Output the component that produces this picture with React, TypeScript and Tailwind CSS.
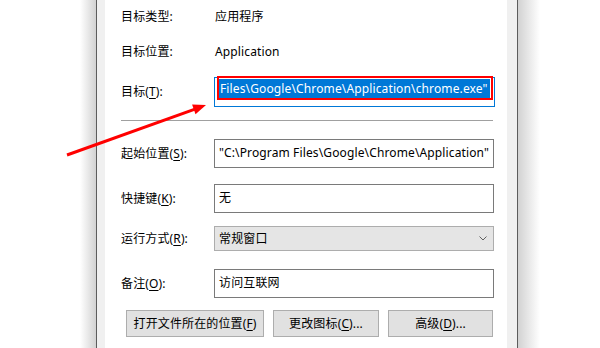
import React from "react"

const font = { fontFamily: '"Noto Sans", "Noto Sans CJK SC", sans-serif' }

function Key({ k }: { k: string }) {
    return <>(<span className="underline underline-offset-2">{k}</span>)</>
}

function Row({ label, children, className }: { label: React.ReactNode; children: React.ReactNode; className?: string }) {
    return (
        <div className={"flex items-center " + (className ?? "")}>
            <div className="w-[93px] shrink-0">{label}</div>
            {children}
        </div>
    )
}

function TextBox({ text }: { text: string }) {
    return (
        <div className="w-[280px] h-[29px] border border-[#7a7a7a] bg-white pl-[4px] pt-[4px] leading-[18px] overflow-hidden whitespace-nowrap">
            {text}
        </div>
    )
}

export default function App() {
    return (
        <div className="relative w-[600px] h-[348px] bg-white overflow-hidden flex text-[12px] tracking-[0.13px] text-black" style={font}>
            <div className="w-[80px] shrink-0 bg-white"></div>
            <div className="w-[16px] shrink-0 bg-gradient-to-r from-white to-[#d2d2d2]"></div>
            <div className="w-px shrink-0 bg-[#5c5c5c]"></div>
            <div className="w-[8px] shrink-0 bg-[#f0f0f0]"></div>

            {/* property page */}
            <div className="w-[402px] shrink-0 bg-white pl-[16px] flex flex-col">
                <Row label="目标类型:" className="h-[24px] mt-[5px]">
                    <span className="pl-px">应用程序</span>
                </Row>
                <Row label="目标位置:" className="h-[24px] mt-[11px]">
                    <span className="pl-px">Application</span>
                </Row>
                <Row label={<>目标<Key k="T" />:</>} className="h-[30px] mt-[13px]">
                    <div className="relative w-[281px] h-[30px] border border-[#0078d7] bg-white pl-[4px] pt-[1px]">
                        <div className="h-[19px] w-[271px] bg-[#0078d7] text-white leading-[19px] whitespace-nowrap overflow-hidden pl-px">
                            Files\Google\Chrome\Application\chrome.exe"
                        </div>
                        <div className="absolute left-[2px] top-[-2px] w-[276px] h-[24px] border-2 border-[#ff0000]"></div>
                    </div>
                </Row>
                <div className="mt-[13px] w-[372px] h-px bg-[#a0a0a0]"></div>
                <Row label={<>起始位置<Key k="S" />:</>} className="h-[29px] mt-[18px]">
                    <TextBox text={'"C:\\Program Files\\Google\\Chrome\\Application"'} />
                </Row>
                <Row label={<>快捷键<Key k="K" />:</>} className="h-[29px] mt-[16px]">
                    <TextBox text="无" />
                </Row>
                <Row label={<>运行方式<Key k="R" />:</>} className="h-[25px] mt-[13px]">
                    <div className="w-[280px] h-[25px] border border-[#adadad] bg-[#e5e5e5] pl-[4px] flex items-center justify-between pr-[6px]">
                        <span>常规窗口</span>
                        <svg width="8" height="5" viewBox="0 0 8 5" fill="none">
                            <path d="M0.5 0.5 L4 4 L7.5 0.5" stroke="#606060" strokeWidth="1" />
                        </svg>
                    </div>
                </Row>
                <Row label={<>备注<Key k="O" />:</>} className="h-[29px] mt-[18px]">
                    <TextBox text="访问互联网" />
                </Row>
                <div className="flex gap-[9px] mt-[12px] pl-[5px]">
                    <button className="w-[138px] h-[27px] border border-[#adadad] bg-[#e1e1e1]">打开文件所在的位置<Key k="F" /></button>
                    <button className="w-[106px] h-[27px] border border-[#adadad] bg-[#e1e1e1]">更改图标<Key k="C" />...</button>
                    <button className="w-[105px] h-[27px] border border-[#adadad] bg-[#e1e1e1]">高级<Key k="D" />...</button>
                </div>
            </div>

            <div className="w-[10px] shrink-0 bg-[#f0f0f0]"></div>
            <div className="w-px shrink-0 bg-[#5c5c5c]"></div>
            <div className="w-[22px] shrink-0 bg-gradient-to-r from-[#d2d2d2] to-white"></div>
            <div className="flex-1 bg-white"></div>

            {/* annotation arrow */}
            <svg className="absolute left-0 top-0 pointer-events-none" width="600" height="348">
                <line x1="67" y1="155" x2="195" y2="109.2" stroke="#ff0000" strokeWidth="3" />
                <polygon points="206,105 195.5,114.3 192.1,104.6" fill="#ff0000" />
            </svg>
        </div>
    )
}
